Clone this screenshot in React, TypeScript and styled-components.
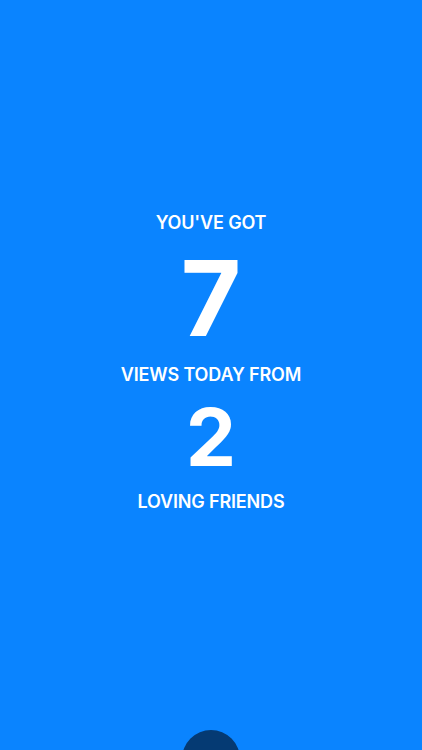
import React from "react";
import styled, { createGlobalStyle } from "styled-components";

const Global = createGlobalStyle`
  html, body { margin: 0; padding: 0; height: 100%; }
  body { background: #0a84ff; font-family: Inter, "Noto Sans", sans-serif; }
  #root { height: 100%; }
`;

const Screen = styled.div`
  position: relative;
  height: 100vh;
  overflow: hidden;
  background: #0a84ff;
  display: flex;
  flex-direction: column;
  align-items: center;
  padding-top: 211.5px;
  box-sizing: border-box;
  color: #ffffff;
`;

const Caption = styled.div<{ $mt?: number }>`
  font-size: 18px;
  line-height: 22px;
  font-weight: 600;
  letter-spacing: -0.15px;
  margin-top: ${(p) => p.$mt ?? 0}px;
  white-space: nowrap;
`;

const Count = styled.div<{ $size: number; $mt: number }>`
  font-size: ${(p) => p.$size}px;
  line-height: ${(p) => p.$size}px;
  font-weight: 700;
  margin-top: ${(p) => p.$mt}px;
`;

const ActionButton = styled.button`
  position: absolute;
  left: 50%;
  bottom: -38px;
  width: 58px;
  height: 58px;
  margin-left: -29px;
  border: none;
  padding: 0;
  border-radius: 50%;
  background: #053a73;
`;

export default function App() {
  return (
    <>
      <Global />
      <Screen>
        <Caption>YOU'VE GOT</Caption>
        <Count $size={104} $mt={12}>7</Count>
        <Caption $mt={14.8}>VIEWS TODAY FROM</Caption>
        <Count $size={80} $mt={10.5}>2</Count>
        <Caption $mt={14.5}>LOVING FRIENDS</Caption>
        <ActionButton aria-label="action" />
      </Screen>
    </>
  );
}
